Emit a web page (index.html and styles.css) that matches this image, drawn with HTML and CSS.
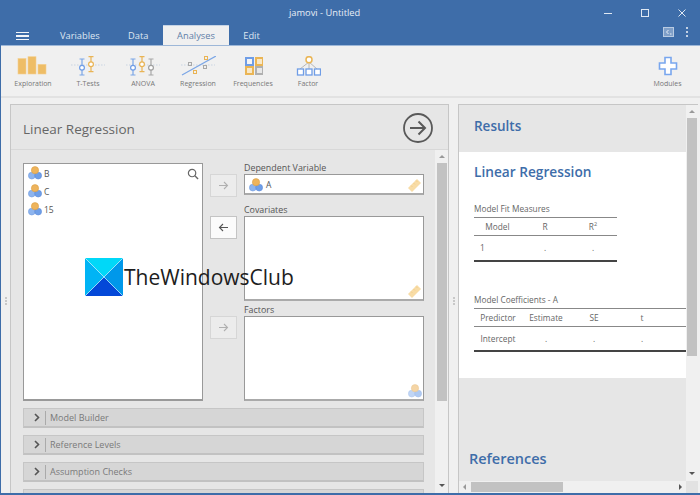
FILE: index.html
```html
<!DOCTYPE html>
<html lang="en">
<head>
<meta charset="utf-8">
<title>jamovi - Untitled</title>
<link rel="stylesheet" href="styles.css">
</head>
<body>
<svg class="defs" width="0" height="0" aria-hidden="true">
  <symbol id="nominal" viewBox="0 0 14 14">
    <circle cx="3.800" cy="9.600" r="3.400" fill="#8db4ee" stroke="#6f9be0" stroke-width=".6"/>
    <circle cx="10.200" cy="9.600" r="3.400" fill="#6f9fe8" stroke="#5a8ad8" stroke-width=".6"/>
    <circle cx="7" cy="4.200" r="3.600" fill="#eeb45c" stroke="#dc9f44" stroke-width=".6"/>
  </symbol>
  <symbol id="ruler" viewBox="0 0 13 13">
    <path d="M0 9 9 0l4 4-9 9Z" fill="#f8dca6"/>
    <path d="M3 6.500l1.500 1.500M5.500 4 7 5.500M8 1.500 9.500 3" stroke="#f0c983" stroke-width=".7"/>
  </symbol>
</svg>
<div class="app">
  <header class="titlebar">
    <div class="title">jamovi - Untitled</div>
    <div class="winbtns">
      <svg width="10" height="10" viewBox="0 0 10 10"><path d="M1 5.500h8" stroke="#dfe8f3" stroke-width="1"/></svg>
      <svg width="10" height="10" viewBox="0 0 10 10"><rect x="1.500" y="1.500" width="7" height="7" fill="none" stroke="#dfe8f3"/></svg>
      <svg width="10" height="10" viewBox="0 0 10 10"><path d="M1.500 1.500l7 7M8.500 1.500l-7 7" stroke="#dfe8f3"/></svg>
    </div>
  </header>
  <nav class="tabbar">
    <div class="burger"><span></span><span></span><span></span></div>
    <div class="tab tab-vars">Variables</div>
    <div class="tab tab-data">Data</div>
    <div class="tab tab-active">Analyses</div>
    <div class="tab tab-edit">Edit</div>
    <div class="tabtools">
      <svg width="11" height="10" viewBox="0 0 11 10"><rect x=".5" y=".5" width="10" height="9" fill="#7f9fc8" stroke="#b9cbe2"/><path d="M5.500 3 3.500 5l2 2" fill="none" stroke="#e8eef6"/><path d="M7 7h1.500" stroke="#e8eef6"/></svg>
      <div class="dots"><i></i><i></i><i></i></div>
    </div>
  </nav>
  <section class="ribbon">
    <div class="tool">
      <svg width="36" height="20" viewBox="0 0 36 20"><rect x="3" y="2.500" width="8" height="15.500" fill="#eebd66" stroke="#f3d193" stroke-width=".6"/><rect x="13" y=".7" width="8" height="17.300" fill="#eebd66" stroke="#f3d193" stroke-width=".6"/><rect x="23" y="8.300" width="8" height="9.700" fill="#eebd66" stroke="#f3d193" stroke-width=".6"/></svg>
      <span>Exploration</span>
    </div>
    <div class="tool">
      <svg width="36" height="20" viewBox="0 0 36 20"><path d="M1 9h34" stroke="#b9c8dc" stroke-width=".7" stroke-dasharray="1.500 1.500"/><path d="M12 3v16M9.500 3h5M9.500 19h5" stroke="#7ba6e6" stroke-width="1.200" fill="none"/><circle cx="12" cy="11.700" r="2.400" fill="#fff" stroke="#6f9de6" stroke-width="1.200"/><path d="M21 .7v15M18.500 .7h5M18.500 15.700h5" stroke="#e9b455" stroke-width="1.200" fill="none"/><circle cx="21" cy="8.300" r="2.400" fill="#fff" stroke="#e9b455" stroke-width="1.200"/></svg>
      <span>T-Tests</span>
    </div>
    <div class="tool">
      <svg width="36" height="20" viewBox="0 0 36 20"><path d="M1 9h34" stroke="#b9c8dc" stroke-width=".7" stroke-dasharray="1.500 1.500"/><path d="M8 3v16M5.500 3h5M5.500 19h5" stroke="#7ba6e6" stroke-width="1.200" fill="none"/><circle cx="8" cy="11.700" r="2.400" fill="#fff" stroke="#6f9de6" stroke-width="1.200"/><path d="M17 .7v15M14.500 .7h5M14.500 15.700h5" stroke="#e9b455" stroke-width="1.200" fill="none"/><circle cx="17" cy="8.300" r="2.400" fill="#fff" stroke="#e9b455" stroke-width="1.200"/><path d="M26 3v16M23.500 3h5M23.500 19h5" stroke="#a8a8a8" stroke-width="1.200" fill="none"/><circle cx="26" cy="11.700" r="2.400" fill="#fff" stroke="#a0a0a0" stroke-width="1.200"/></svg>
      <span>ANOVA</span>
    </div>
    <div class="tool">
      <svg width="36" height="20" viewBox="0 0 36 20"><path d="M1 9h34" stroke="#b9c8dc" stroke-width=".7" stroke-dasharray="1.500 1.500"/><path d="M2 19 36 0" stroke="#7ba6e6" stroke-width="1.200"/><rect x="8.500" y="6.500" width="3" height="3" fill="none" stroke="#a8a8a8"/><rect x="24.500" y=".5" width="3" height="3" fill="#f0f0f0" stroke="#e9b455"/><rect x="23.500" y="9.500" width="3" height="3" fill="none" stroke="#a8a8a8"/><rect x="13.500" y="14.500" width="3" height="3" fill="none" stroke="#e9b455"/></svg>
      <span>Regression</span>
    </div>
    <div class="tool">
      <svg width="20" height="20" viewBox="0 0 20 20"><rect x="3" y="2" width="7" height="7" fill="#f5f5f5" stroke="#6f9de6" stroke-width="2"/><rect x="13" y="2" width="7" height="7" fill="#f8e8c8" stroke="#eab555" stroke-width="2"/><rect x="3" y="11" width="7" height="7" fill="#f8e8c8" stroke="#eab555" stroke-width="2"/><rect x="13" y="11" width="7" height="7" fill="#e8e8e8" stroke="#b0b0b0" stroke-width="2"/></svg>
      <span>Frequencies</span>
    </div>
    <div class="tool">
      <svg width="26" height="20" viewBox="0 0 26 20"><path d="M14 6 5 13M14 6v7M14 6l8 7" stroke="#a8a8a8" stroke-width=".8"/><circle cx="14" cy="3.700" r="3" fill="#fff" stroke="#eab555" stroke-width="1.500"/><rect x="2.500" y="13" width="6" height="6" fill="#fff" stroke="#6f9de6" stroke-width="1.300"/><rect x="11" y="13" width="6" height="6" fill="#fff" stroke="#6f9de6" stroke-width="1.300"/><rect x="19.500" y="13" width="6" height="6" fill="#fff" stroke="#6f9de6" stroke-width="1.300"/></svg>
      <span>Factor</span>
    </div>
    <div class="tool tool-end">
      <svg width="20" height="20" viewBox="0 0 20 20"><path d="M7 1.500h6v5.500h5.500v6H13v5.500H7V13H1.500V7H7Z" fill="#fff" stroke="#78a6ee" stroke-width="1.600"/></svg>
      <span>Modules</span>
    </div>
  </section>
  <main class="workspace">
    <div class="splitter"><i></i><i></i><i></i></div>
    <section class="options">
      <div class="opt-head">
        <h1>Linear Regression</h1>
        <svg width="30" height="30" viewBox="0 0 30 30"><circle cx="15" cy="15" r="14" fill="none" stroke="#595959" stroke-width="1.800"/><path d="M7 15h15M15.500 8.500 22 15l-6.500 6.500" fill="none" stroke="#595959" stroke-width="2"/></svg>
      </div>
      <div class="opt-body">
        <div class="opt-scroll">
          <div class="supplier">
            <div class="varlist">
              <div class="var"><svg class="ico"><use href="#nominal"/></svg>B</div>
              <div class="var"><svg class="ico"><use href="#nominal"/></svg>C</div>
              <div class="var"><svg class="ico"><use href="#nominal"/></svg>15</div>
              <svg class="search" width="12" height="12" viewBox="0 0 13 13"><circle cx="5.500" cy="5.500" r="4" fill="none" stroke="#666" stroke-width="1.300"/><path d="M8.500 8.500l3.500 3.500" stroke="#666" stroke-width="1.500"/></svg>
            </div>
            <div class="movers">
              <div class="mover mover-dep"><svg width="11" height="9" viewBox="0 0 11 9"><path d="M1 4.500h8.500M6 1l3.500 3.500L6 8" fill="none" stroke="#b0b0b0" stroke-width="1.100"/></svg></div>
              <div class="mover mover-cov active"><svg width="11" height="9" viewBox="0 0 11 9"><path d="M10 4.500H1.500M5 1 1.500 4.500 5 8" fill="none" stroke="#555" stroke-width="1.100"/></svg></div>
              <div class="mover mover-fac"><svg width="11" height="9" viewBox="0 0 11 9"><path d="M1 4.500h8.500M6 1l3.500 3.500L6 8" fill="none" stroke="#b0b0b0" stroke-width="1.100"/></svg></div>
            </div>
            <div class="targets">
              <div class="label">Dependent Variable</div>
              <div class="target t-dep"><div class="var"><svg class="ico"><use href="#nominal"/></svg>A</div><svg class="badge"><use href="#ruler"/></svg></div>
              <div class="label">Covariates</div>
              <div class="target t-cov"><svg class="badge"><use href="#ruler"/></svg></div>
              <div class="label">Factors</div>
              <div class="target t-fac"><svg class="badge badge-nom"><use href="#nominal"/></svg></div>
            </div>
          </div>
          <div class="collapser"><svg width="6" height="9" viewBox="0 0 6 9"><path d="M1 1l3.500 3.500L1 8" fill="none" stroke="#555" stroke-width="1.600"/></svg><span>Model Builder</span></div>
          <div class="collapser"><svg width="6" height="9" viewBox="0 0 6 9"><path d="M1 1l3.500 3.500L1 8" fill="none" stroke="#555" stroke-width="1.600"/></svg><span>Reference Levels</span></div>
          <div class="collapser"><svg width="6" height="9" viewBox="0 0 6 9"><path d="M1 1l3.500 3.500L1 8" fill="none" stroke="#555" stroke-width="1.600"/></svg><span>Assumption Checks</span></div>
          <div class="collapser"></div>
        </div>
        <div class="vscroll">
          <div class="arrow up"></div>
          <div class="thumb"></div>
          <div class="arrow down"></div>
        </div>
      </div>
    </section>
    <div class="splitter"><i></i><i></i><i></i></div>
    <section class="results">
      <div class="res-main">
        <div class="res-view">
          <div class="res-top"><h2>Results</h2></div>
          <div class="res-white">
            <h3>Linear Regression</h3>
            <div class="tbl-title">Model Fit Measures</div>
            <table class="fit">
              <tr class="hd"><th>Model</th><th>R</th><th>R<sup>2</sup></th></tr>
              <tr class="bd"><td class="left">1</td><td>.</td><td>.</td></tr>
            </table>
            <div class="tbl-title second">Model Coefficients - A</div>
            <table class="coef">
              <tr class="hd"><th>Predictor</th><th>Estimate</th><th>SE</th><th>t</th><th></th></tr>
              <tr class="bd"><td>Intercept</td><td>.</td><td>.</td><td>.</td><td></td></tr>
            </table>
          </div>
          <div class="res-bottom"><h2>References</h2></div>
        </div>
        <div class="vscroll res-vs">
          <div class="arrow up"></div>
          <div class="thumb"></div>
          <div class="arrow down"></div>
        </div>
      </div>
      <div class="hscroll">
        <div class="arrow left"></div>
        <div class="hthumb"></div>
        <div class="arrow right"></div>
        <div class="corner"></div>
      </div>
    </section>
  </main>
  <div class="watermark">
    <svg width="38" height="38" viewBox="0 0 38 38"><rect width="38" height="38" fill="#00b4f5"/><path d="M0 0h38L19 19Z" fill="#00d8f8"/><path d="M38 0v38L19 19Z" fill="#0098ea"/><path d="M0 38h38L19 19Z" fill="#0448d8"/><path d="M0 0l38 38M38 0 0 38" stroke="#bfeefc" stroke-width=".8"/></svg>
    <span>TheWindowsClub</span>
  </div>
</div>
</body>
</html>
```

FILE: styles.css
```css
* { box-sizing: border-box; }
html, body { margin: 0; height: 100%; }
body { width: 700px; height: 495px; overflow: hidden; font-family: "Open Sans", "Noto Sans", sans-serif; color: #555; }
.defs { position: absolute; }
.app { position: relative; width: 700px; height: 495px; display: flex; flex-direction: column; background: #3e6da9; overflow: hidden; }

.titlebar { height: 25px; flex: none; display: flex; align-items: center; justify-content: space-between; padding: 0 13px 0 289px; }
.title { color: #e8eef6; font-size: 9.300px; line-height: 26px; white-space: nowrap; }
.winbtns { display: flex; gap: 27px; }

.tabbar { height: 20px; flex: none; display: flex; align-items: flex-end; }
.burger { width: 13px; margin: 0 0 5px 16px; display: flex; flex-direction: column; gap: 2px; }
.burger span { display: block; height: 1.500px; background: #f2f5f9; }
.tab { color: #dfe7f2; font-size: 9.300px; height: 20px; line-height: 21px; text-align: center; }
.tab-vars { margin-left: 31px; width: 38px; }
.tab-data { margin-left: 30px; width: 19px; }
.tab-active { margin-left: 16px; width: 66px; background: #f0f0f0; color: #5f7fa8; border-top: 1px solid #c5d3e5; line-height: 19px; }
.tab-edit { margin-left: 14px; width: 17px; }
.tabtools { margin-left: auto; display: flex; align-items: center; gap: 12px; padding-right: 12px; height: 20px; margin-bottom: 3px; }
.dots { display: flex; flex-direction: column; gap: 1.500px; }
.dots i { display: block; width: 2.500px; height: 2.500px; border-radius: 50%; background: #f0f3f8; }

.ribbon { height: 53px; flex: none; margin-left: 1px; background: #f0f0f0; border-bottom: 2px solid #e2e2e2; border-top: 1px solid #9db7d8; display: flex; padding-left: 4.500px; }
.tool { width: 55px; display: flex; flex-direction: column; align-items: center; justify-content: flex-end; height: 43px; font-size: 7px; color: #777; }
.tool svg { flex: none; }
.tool span { margin-top: 3px; line-height: 10px; white-space: nowrap; }
.tool-end { margin-left: auto; margin-right: 5px; }

.workspace { flex: 1; min-height: 0; display: flex; margin: 0 0 2px 1px; background: #f0f0f0; padding: 6px 2px 0 0; }
.options { width: 439px; flex: none; border: 1px solid #c6c6c6; border-bottom: 0; background: #e6e6e6; display: flex; flex-direction: column; min-height: 0; }
.opt-head { height: 45px; flex: none; padding: 1px 15px 0 12px; display: flex; align-items: center; justify-content: space-between; border-bottom: 1px solid #d8d8d8; }
.opt-head h1 { margin: 3px 0 0; font-weight: 400; font-size: 13.500px; color: #666; }
.opt-body { flex: 1; min-height: 0; display: flex; }
.opt-scroll { flex: 1; min-width: 0; padding: 13px 0 0 12px; overflow: hidden; }
.supplier { display: flex; height: 238px; }
.varlist { position: relative; width: 180px; background: #fff; border: 1px solid #999; border-bottom-width: 2px; }
.var { display: flex; align-items: center; height: 18px; padding-left: 4px; font-size: 8.500px; color: #555; }
.ico { width: 14px; height: 14px; margin-right: 2px; flex: none; }
.target .ico { margin-right: 3px; }
.search { position: absolute; right: 3px; top: 4px; }
.movers { width: 41px; flex: none; display: flex; flex-direction: column; align-items: center; }
.mover { width: 27px; height: 23px; border: 1px solid #d6d6d6; background: #ececec; display: flex; align-items: center; justify-content: center; }
.mover.active { background: #fbfbfb; border-color: #c4c4c4; }
.mover-dep { margin-top: 11px; }
.mover-cov { margin-top: 19px; }
.mover-fac { margin-top: 77px; }
.targets { width: 180px; flex: none; display: flex; flex-direction: column; }
.label { height: 11px; font-size: 8.900px; line-height: 9px; color: #555; white-space: nowrap; }
.target { position: relative; background: #fff; border: 1px solid #999; border-bottom: 2px solid #aaa; }
.t-dep { height: 21px; margin-bottom: 10px; }
.t-dep .var { height: 19px; }
.t-cov { height: 85px; margin-bottom: 4px; }
.t-fac { height: 85px; }
.badge { position: absolute; right: 2px; bottom: 1px; width: 13px; height: 13px; }
.badge-nom { width: 14px; height: 14px; right: 1px; bottom: 1px; opacity: .55; }
.collapser { height: 20px; margin-top: 7px; width: 401px; background: #d6d6d6; border: 1px solid #c6c6c6; border-bottom: 2px solid #c2c2c2; display: flex; align-items: center; padding-left: 10px; font-size: 9px; color: #7a7a7a; }
.collapser svg { flex: none; }
.collapser span { margin-left: 5px; padding-left: 4px; border-left: 1px solid #aaa; line-height: 14px; }
.vscroll { width: 13px; flex: none; background: #f0f0f0; display: flex; flex-direction: column; align-items: center; }
.thumb { flex: none; width: 10px; height: 238px; background: #c2c2c2; }
.arrow { width: 0; height: 0; border: 3px solid transparent; flex: none; }
.arrow.up { border-bottom: 3px solid #999; border-top: 0; margin: 5px 0 5px; }
.arrow.down { border-top: 3px solid #555; border-bottom: 0; margin: auto 0 6px; }
.arrow.left { border-right: 3px solid #999; border-left: 0; margin: 0 5px 0 4px; }
.arrow.right { border-left: 3px solid #555; border-right: 0; margin: 0 4px 0 auto; }

.splitter { width: 9px; flex: none; display: flex; flex-direction: column; justify-content: center; align-items: center; gap: 1px; padding-top: 5px; }
.splitter i { width: 2px; height: 2px; background: #c8c8c8; }
.results { flex: 1; min-width: 0; border: 1px solid #c6c6c6; border-bottom: 0; border-right: 0; display: flex; flex-direction: column; background: #e6e6e6; }
.res-main { flex: 1; min-height: 0; display: flex; }
.res-view { flex: 1; min-width: 0; display: flex; flex-direction: column; overflow: hidden; }
.res-vs { width: 12px; }
.res-top { height: 47px; flex: none; padding: 12px 0 0 15px; }
.res-top h2, .res-bottom h2 { margin: 0; font-size: 13.500px; line-height: 18px; color: #3e6da9; font-weight: 600; }
.res-bottom h2 { font-size: 14.500px; }
.res-white { height: 226px; flex: none; background: #fff; padding: 11px 0 0 15px; overflow: hidden; }
.res-white h3 { margin: 0; font-size: 13.700px; line-height: 18px; color: #3e6da9; font-weight: 600; }
.tbl-title { font-size: 8.300px; line-height: 10px; color: #666; margin-top: 23px; }
.tbl-title.second { margin-top: 33px; }
table { border-collapse: collapse; font-size: 8.300px; color: #666; margin-top: 3px; table-layout: fixed; }
th { font-weight: 400; }
.hd th { height: 18px; border-top: 1px solid #888; border-bottom: 1px solid #888; padding: 0; }
.bd td { height: 25px; border-bottom: 2px solid #444; padding: 0; text-align: center; }
.fit { width: 143px; }
.fit th:nth-child(1) { width: 47px; }
.fit th:nth-child(2), .fit th:nth-child(3) { width: 48px; }
.fit .bd td.left { text-align: left; padding-left: 6px; }
.coef { width: 212px; }
.coef th:nth-child(-n+4) { width: 48px; }
sup { font-size: 5.500px; line-height: 0; }
.res-bottom { flex: 1; padding: 72px 0 0 10px; }
.hscroll { height: 12px; flex: none; background: #f0f0f0; display: flex; align-items: center; }
.hthumb { width: 92px; height: 10px; background: #c2c2c2; }
.corner { width: 12px; height: 12px; flex: none; background: #e2e2e2; }

.watermark { position: absolute; left: 85px; top: 258px; display: flex; align-items: center; gap: 1px; color: #1d1d1d; font-size: 21px; pointer-events: none; }
.watermark span { line-height: 38px; }
```
